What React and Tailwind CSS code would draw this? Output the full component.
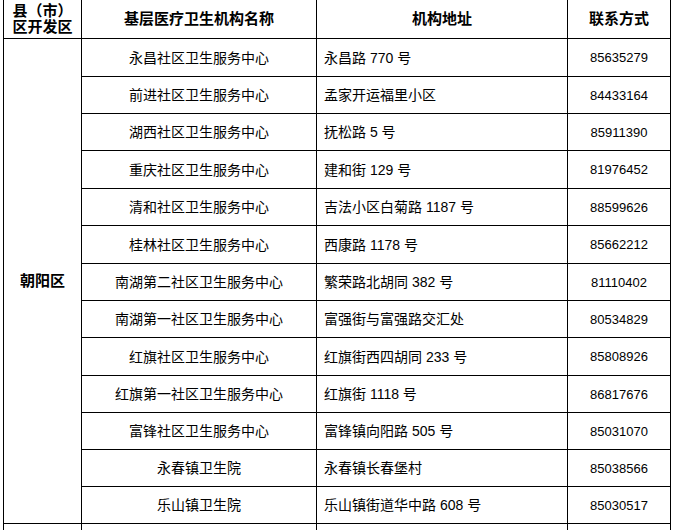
import React from "react";

const rows = [
  ["永昌社区卫生服务中心", "永昌路 770 号", "85635279"],
  ["前进社区卫生服务中心", "孟家开运福里小区", "84433164"],
  ["湖西社区卫生服务中心", "抚松路 5 号", "85911390"],
  ["重庆社区卫生服务中心", "建和街 129 号", "81976452"],
  ["清和社区卫生服务中心", "吉法小区白菊路 1187 号", "88599626"],
  ["桂林社区卫生服务中心", "西康路 1178 号", "85662212"],
  ["南湖第二社区卫生服务中心", "繁荣路北胡同 382 号", "81110402"],
  ["南湖第一社区卫生服务中心", "富强街与富强路交汇处", "80534829"],
  ["红旗社区卫生服务中心", "红旗街西四胡同 233 号", "85808926"],
  ["红旗第一社区卫生服务中心", "红旗街 1118 号", "86817676"],
  ["富锋社区卫生服务中心", "富锋镇向阳路 505 号", "85031070"],
  ["永春镇卫生院", "永春镇长春堡村", "85038566"],
  ["乐山镇卫生院", "乐山镇街道华中路 608 号", "85030517"],
];

export default function App() {
  return (
    <div className="w-[674px] h-[530px] overflow-hidden bg-white font-['Liberation_Sans','Noto_Sans_CJK_SC',sans-serif] text-black">
      <div className="ml-[3px] w-[668px] bg-black px-px pb-px grid gap-px grid-cols-[77px_234px_250px_102px] grid-rows-[38px_37px_36px_36px_37px_36px_37px_36px_36px_37px_36px_36px_36px_36px_40px]">
        <div className="bg-white flex items-center justify-center font-bold text-[15px] leading-[16px] text-center">
          <span>县（市）<br />区开发区</span>
        </div>
        <div className="bg-white flex items-center justify-center font-bold text-[15px]">基层医疗卫生机构名称</div>
        <div className="bg-white flex items-center justify-center font-bold text-[15px]">机构地址</div>
        <div className="bg-white flex items-center justify-center font-bold text-[15px]">联系方式</div>

        <div className="bg-white row-span-13 flex items-center justify-center font-bold text-[15px]">朝阳区</div>
        {rows.map((r, i) => (
          <React.Fragment key={i}>
            <div className="bg-white flex items-center justify-center text-[14px] pt-[1px]">{r[0]}</div>
            <div className="bg-white flex items-center pl-[7px] text-[14px] pt-[1px]">{r[1]}</div>
            <div className="bg-white flex items-center justify-center text-[13px] pt-[1px]">{r[2]}</div>
          </React.Fragment>
        ))}
        <div className="bg-white"></div>
        <div className="bg-white"></div>
        <div className="bg-white"></div>
        <div className="bg-white"></div>
      </div>
    </div>
  );
}
